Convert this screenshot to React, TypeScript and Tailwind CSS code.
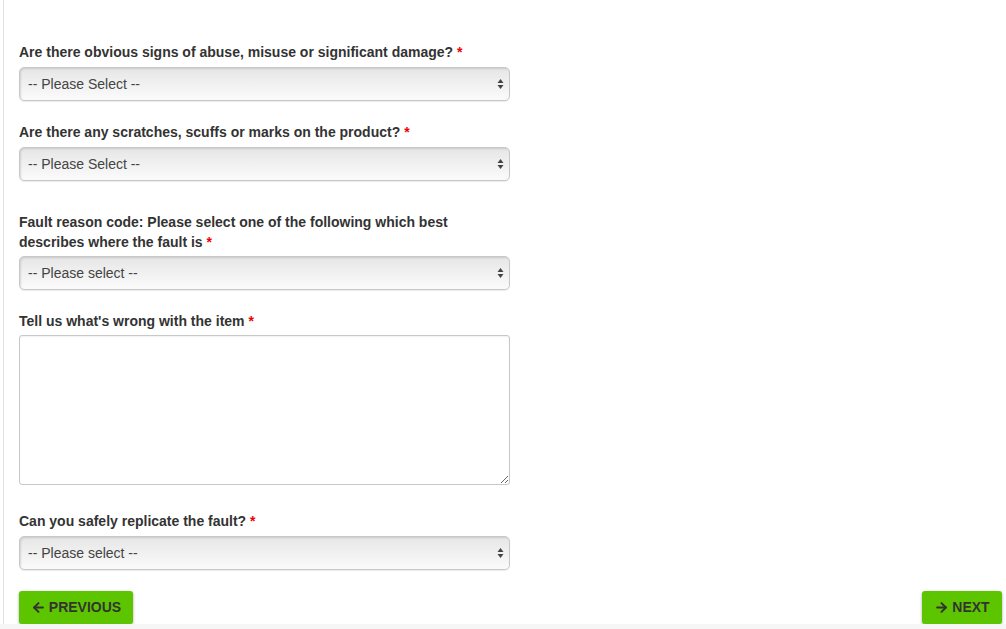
import { ArrowLeft, ArrowRight } from "lucide-react";

function Label({ children }: { children: React.ReactNode }) {
  return (
    <label className="block w-[491px] text-[14px] font-bold leading-5 text-[#333]">
      {children} <span className="text-[#e00]">*</span>
    </label>
  );
}

function SelectBox({ placeholder }: { placeholder: string }) {
  return (
    <div className="relative mt-[5px] w-[491px]">
      <select
        defaultValue=""
        className="block h-[34px] w-full appearance-none rounded-[5px] border border-[#c8c8c8] bg-gradient-to-b from-[#e6e6e6] to-[#fbfbfb] pl-[8px] pr-6 text-[14px] text-[#444] shadow-[inset_1px_1px_2px_rgba(0,0,0,0.12),0_1px_1px_rgba(0,0,0,0.08)] outline-none"
      >
        <option value="">{placeholder}</option>
      </select>
      <svg
        className="pointer-events-none absolute right-[6px] top-[11px]"
        width="7"
        height="12"
        viewBox="0 0 7 12"
      >
        <path d="M3.5 1 L6.5 5 L0.5 5 Z" fill="#444" />
        <path d="M3.5 11 L6.5 7 L0.5 7 Z" fill="#444" />
      </svg>
    </div>
  );
}

export default function App() {
  return (
    <main
      className="flex h-[629px] w-full flex-col bg-white"
      style={{ fontFamily: '"Liberation Sans", Arial, sans-serif' }}
    >
      <div className="ml-[3px] flex-1 border-l border-[#e2e2e2] pl-[15px] pr-[4px] pt-[42px]">
        <Label>Are there obvious signs of abuse, misuse or significant damage?</Label>
        <SelectBox placeholder="-- Please Select --" />

        <div className="mt-[21px]">
          <Label>Are there any scratches, scuffs or marks on the product?</Label>
          <SelectBox placeholder="-- Please Select --" />
        </div>

        <div className="mt-[31px]">
          <Label>
            Fault reason code: Please select one of the following which best describes where the
            fault is
          </Label>
          <div className="-mt-px">
            <SelectBox placeholder="-- Please select --" />
          </div>
        </div>

        <div className="mt-[21px]">
          <Label>Tell us what's wrong with the item</Label>
          <textarea className="mt-[4px] block h-[150px] w-[491px] rounded-[3px] border border-[#c8c8c8] bg-white shadow-[inset_0_1px_2px_rgba(0,0,0,0.06)] outline-none" />
        </div>

        <div className="mt-[26px]">
          <Label>Can you safely replicate the fault?</Label>
          <SelectBox placeholder="-- Please select --" />
        </div>

        <div className="mt-[21px] flex items-start justify-between">
          <button className="flex h-[33px] w-[114px] items-center justify-center gap-[3px] rounded-[3px] bg-[#5dc500] text-[14px] font-bold text-[#333] shadow-[0_1px_3px_rgba(0,0,0,0.35)]">
            <ArrowLeft size={15} strokeWidth={3.25} />
            PREVIOUS
          </button>
          <button className="flex h-[33px] w-[80px] items-center justify-center gap-[3px] rounded-[3px] bg-[#5dc500] text-[14px] font-bold text-[#333] shadow-[0_1px_3px_rgba(0,0,0,0.35)]">
            <ArrowRight size={15} strokeWidth={3.25} />
            NEXT
          </button>
        </div>
      </div>
      <div className="h-[5px] bg-[#f6f6f6]" />
    </main>
  );
}
